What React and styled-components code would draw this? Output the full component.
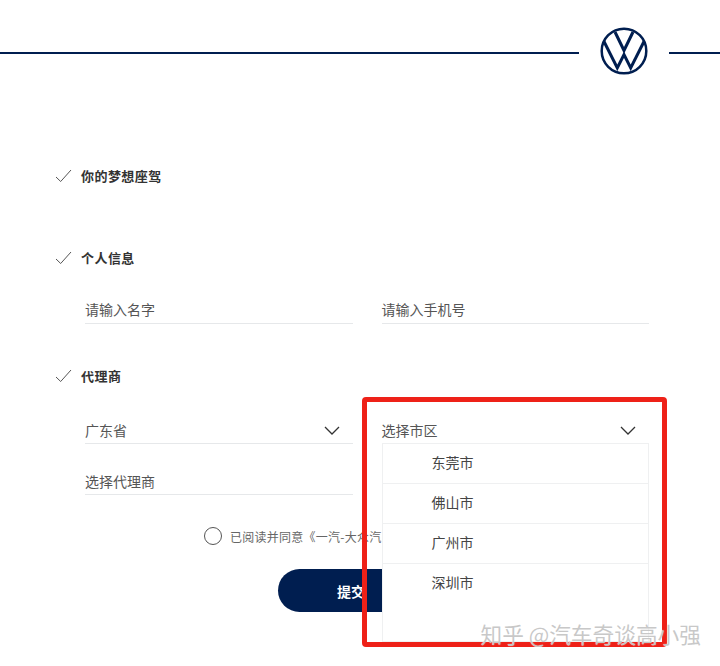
import React from 'react';
import styled, { createGlobalStyle } from 'styled-components';

const navy = '#001e50';

const GlobalStyle = createGlobalStyle`
    html, body {
        margin: 0;
        background: #fff;
        font-family: "Noto Sans CJK SC", "Liberation Sans", sans-serif;
    }
`;

const Page = styled.div`
    position: relative;
    width: 720px;
    height: 666px;
    overflow: hidden;
    background: #fff;
`;

const Header = styled.header`
    display: flex;
    align-items: center;
    height: 48px;
    padding-top: 27px;
`;

const HeaderLine = styled.div`
    flex: ${(p) => (p.$short ? '0 0 51px' : '1')};
    height: 2px;
    margin-top: 4px;
    background: ${navy};
`;

const Logo = styled.svg`
    width: 48px;
    height: 48px;
    margin: 0 21px;
    flex: none;
`;

const Form = styled.form`
    display: flex;
    flex-direction: column;
    padding: 91px 71px 0 55px;
`;

const Section = styled.section`
    margin-bottom: ${(p) => p.$gap || 42}px;
`;

const Title = styled.h3`
    display: flex;
    align-items: center;
    gap: 9px;
    height: 20px;
    margin: 0;
    padding-bottom: 2px;
    box-sizing: border-box;
    font-size: 13px;
    font-weight: 700;
    letter-spacing: 0.45px;
    color: #333;

    svg {
        margin-top: 1px;
    }
`;

const Fields = styled.div`
    display: grid;
    grid-template-columns: 1fr 1fr;
    column-gap: 29px;
    row-gap: 24px;
    padding-left: 30px;
    margin-top: ${(p) => p.$top || 29}px;
`;

const Field = styled.div`
    position: relative;
    display: flex;
    align-items: center;
    justify-content: space-between;
    height: 27px;
    padding-bottom: ${(p) => (p.$lift ? 2 : 0)}px;
    box-sizing: border-box;
    border-bottom: 1px solid #e6e8ea;
    font-size: 14px;
    color: #555;
`;

const Chevron = styled.svg`
    width: 16px;
    height: 9px;
    margin-right: 13px;
`;

const Dropdown = styled.ul`
    position: absolute;
    top: 26px;
    left: 0;
    right: 0;
    z-index: 2;
    height: 199px;
    margin: 0;
    padding: 0;
    list-style: none;
    background: #fff;
    border: 1px solid #eff0f1;
    box-sizing: border-box;
`;

const Option = styled.li`
    display: flex;
    align-items: center;
    height: 40px;
    padding: 0 0 4px 49px;
    box-sizing: border-box;
    border-bottom: ${(p) => (p.$last ? 'none' : '1px solid #eff0f1')};
    font-size: 14px;
    color: #444;
`;

const Agreement = styled.label`
    display: flex;
    align-items: center;
    gap: 8px;
    height: 20px;
    padding-left: 149px;
    font-size: 12px;
    letter-spacing: 0.25px;
    color: #666;
    white-space: nowrap;
`;

const Radio = styled.span`
    width: 16px;
    height: 16px;
    border: 1px solid #555;
    border-radius: 50%;
    flex: none;
`;

const Submit = styled.button`
    align-self: center;
    width: 146px;
    height: 43px;
    margin: 23px 2px 0 0;
    border: none;
    border-radius: 22px;
    background: ${navy};
    color: #fff;
    font-family: inherit;
    font-size: 14px;
    font-weight: 700;
`;

const Highlight = styled.div`
    position: absolute;
    left: 362px;
    top: 397px;
    width: 305px;
    height: 250px;
    z-index: 3;
    box-sizing: border-box;
    border: 5px solid #ee2118;
    border-radius: 4px;
`;

const Watermark = styled.div`
    position: absolute;
    right: 19px;
    top: 620px;
    z-index: 4;
    font-size: 21.7px;
    line-height: 28px;
    color: rgba(190, 190, 190, 0.85);
    text-shadow: 0 0 1px #fff;
    white-space: nowrap;
`;

const Check = () => (
    <svg width="17" height="14" viewBox="0 0 17 14">
        <polyline points="1,8 5.7,12.5 16,1" fill="none" stroke="#555" strokeWidth="1" />
    </svg>
);

const Arrow = () => (
    <Chevron viewBox="0 0 16 9">
        <polyline points="1,1 8,8 15,1" fill="none" stroke="#333" strokeWidth="1.3" />
    </Chevron>
);

const cities = ['东莞市', '佛山市', '广州市', '深圳市'];

export default function App() {
    return (
        <Page>
            <GlobalStyle />
            <Header>
                <HeaderLine />
                <Logo viewBox="0 0 48 48">
                    <circle cx="24" cy="24" r="22.3" fill="none" stroke={navy} strokeWidth="2.5" />
                    <polyline points="15,5 24,23.5 33,5" fill="none" stroke={navy} strokeWidth="3" />
                    <polyline points="4,14.5 17.3,41 24,27.5 30.7,41 44,14.5" fill="none" stroke={navy} strokeWidth="3" />
                </Logo>
                <HeaderLine $short />
            </Header>
            <Form>
                <Section $gap={62}>
                    <Title><Check />你的梦想座驾</Title>
                </Section>
                <Section>
                    <Title><Check />个人信息</Title>
                    <Fields>
                        <Field $lift>请输入名字</Field>
                        <Field $lift>请输入手机号</Field>
                    </Fields>
                </Section>
                <Section $gap={31}>
                    <Title><Check />代理商</Title>
                    <Fields $top={31}>
                        <Field>广东省<Arrow /></Field>
                        <Field>
                            选择市区<Arrow />
                            <Dropdown>
                                {cities.map((city, index) => (
                                    <Option key={city} $last={index === cities.length - 1}>{city}</Option>
                                ))}
                            </Dropdown>
                        </Field>
                        <Field>选择代理商</Field>
                    </Fields>
                </Section>
                <Agreement>
                    <Radio />
                    已阅读并同意《一汽-大众汽
                </Agreement>
                <Submit type="button">提交</Submit>
            </Form>
            <Highlight />
            <Watermark>知乎 @汽车奇谈高小强</Watermark>
        </Page>
    );
}
